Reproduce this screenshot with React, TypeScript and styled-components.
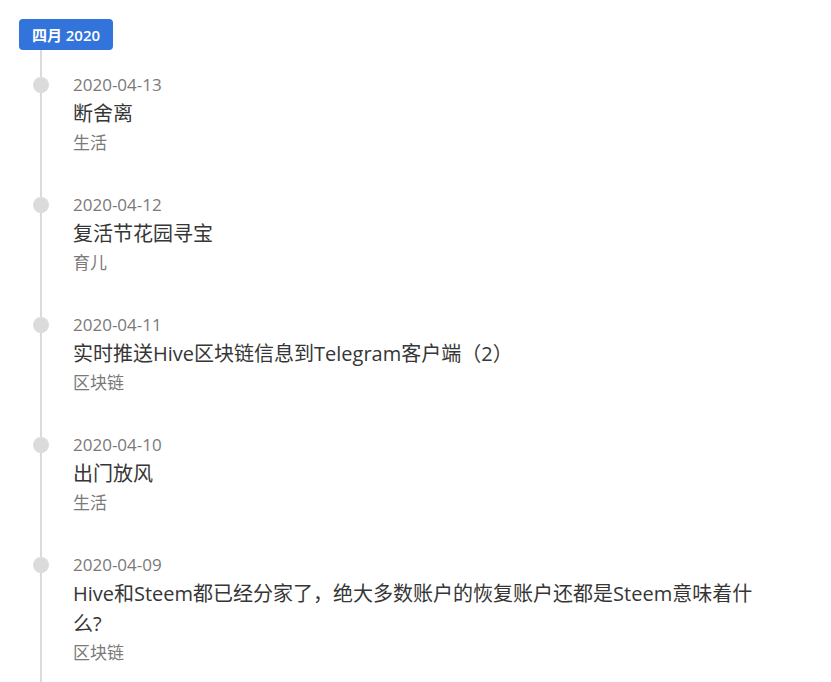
import React from "react"
import styled, { createGlobalStyle } from "styled-components"

const GlobalStyle = createGlobalStyle`
    html, body {
        margin: 0;
        padding: 0;
        background: #ffffff;
    }

    body {
        font-family: "Open Sans", "Noto Sans CJK SC", sans-serif;
        color: #4a4a4a;
    }
`

const STimeline = styled.div`
    display: flex;
    flex-direction: column;
    align-items: flex-start;
    padding: 19px 69px 0 19px;
    min-height: 682px;
    box-sizing: border-box;
`

const SHeader = styled.span`
    display: inline-flex;
    align-items: center;
    justify-content: center;
    height: 31px;
    width: 94px;
    border-radius: 4px;
    background-color: #3273dc;
    color: #ffffff;
    font-size: 15px;
    font-weight: 600;
`

const SList = styled.div`
    display: flex;
    flex-direction: column;
    gap: 35px;
    align-self: stretch;
    margin-left: 21px;
    padding-top: 21px;
    padding-left: 31px;
    border-left: 2px solid #dbdbdb;
    flex: 1;
`

const SItem = styled.div`
    position: relative;
    display: flex;
    flex-direction: column;
`

const SMarker = styled.span`
    position: absolute;
    left: -40px;
    top: 6px;
    width: 16px;
    height: 16px;
    border-radius: 50%;
    background-color: #dbdbdb;
`

const SDate = styled.div`
    font-size: 17px;
    line-height: 28px;
    color: #7a7a7a;
`

const STitle = styled.div`
    font-size: 20px;
    line-height: 30px;
    color: #363636;
`

const SCategory = styled.div`
    font-size: 17px;
    line-height: 27px;
    color: #7a7a7a;
`

const posts = [
    { date: "2020-04-13", title: "断舍离", category: "生活" },
    { date: "2020-04-12", title: "复活节花园寻宝", category: "育儿" },
    { date: "2020-04-11", title: "实时推送Hive区块链信息到Telegram客户端（2）", category: "区块链" },
    { date: "2020-04-10", title: "出门放风", category: "生活" },
    { date: "2020-04-09", title: "Hive和Steem都已经分家了，绝大多数账户的恢复账户还都是Steem意味着什么?", category: "区块链" },
]

export default function App() {
    return (
        <>
            <GlobalStyle />
            <STimeline>
                <SHeader>四月 2020</SHeader>
                <SList>
                    {posts.map((post) => (
                        <SItem key={post.date}>
                            <SMarker />
                            <SDate>{post.date}</SDate>
                            <STitle>{post.title}</STitle>
                            <SCategory>{post.category}</SCategory>
                        </SItem>
                    ))}
                </SList>
            </STimeline>
        </>
    )
}
